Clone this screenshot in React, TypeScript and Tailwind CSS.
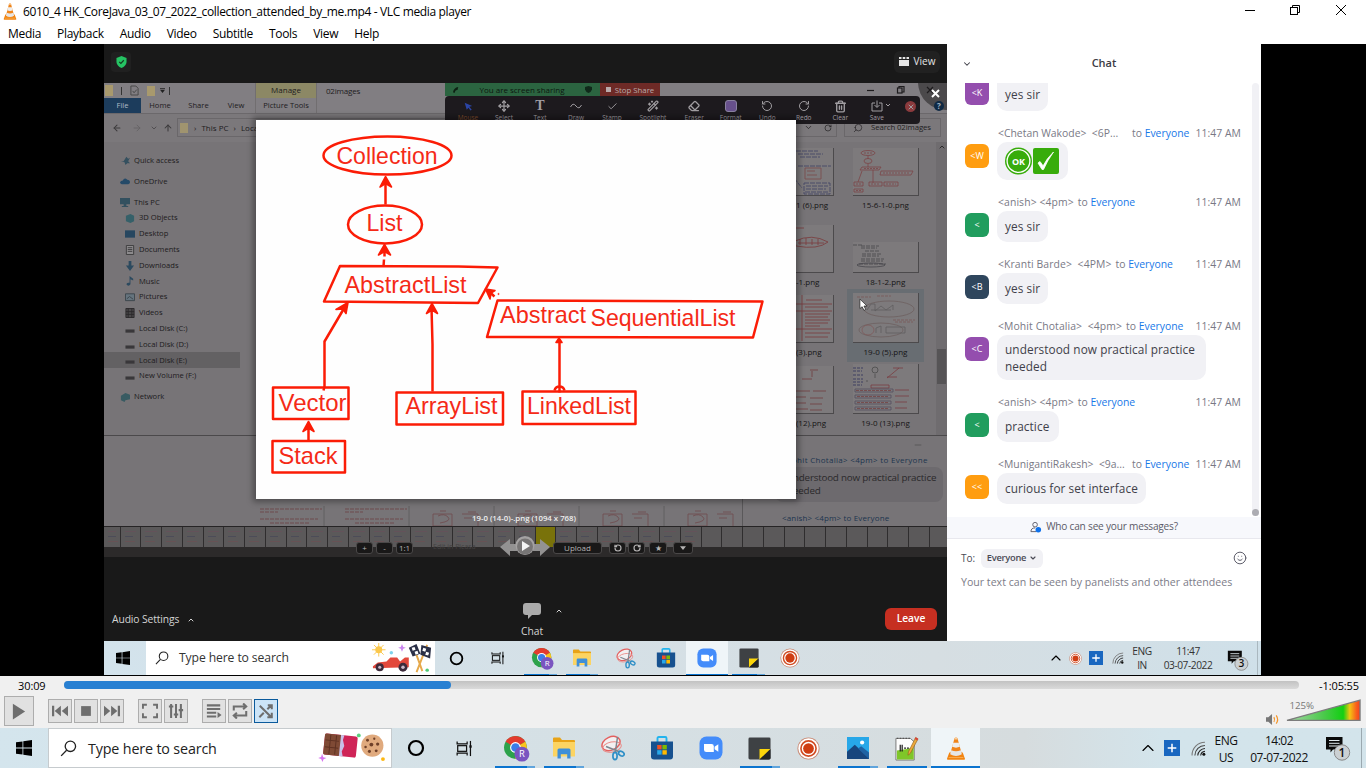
import React from "react";
import {
  ArrowLeft, ArrowRight, ArrowUp, Check, ChevronDown, ChevronUp, Eraser, Move,
  RotateCcw, RotateCw, Search, Trash2, Wand2, X, Smile, Minus,
} from "lucide-react";

type IconProps = { className?: string };

/* ---------- application icons ---------- */

const Cone = ({ className }: IconProps) => (
  <svg viewBox="0 0 24 28" className={className} preserveAspectRatio="none">
    <path d="M4 19 L1.2 26.5 Q1 27.6 2.3 27.6 H21.7 Q23 27.6 22.8 26.5 L20 19 Z" fill="#f28411" />
    <path d="M3.2 25 H20.8" stroke="#f9b45c" strokeWidth="1" />
    <path d="M10.2 1.5 Q12 -.3 13.8 1.5 L19 21 Q12 25 5 21 Z" fill="#f0841a" />
    <path d="M8.7 7 H15.3 L16.7 12 Q12 14 7.3 12 Z" fill="#eeeeee" />
    <path d="M6.3 16 Q12 18.4 17.7 16 L19 21 Q12 25 5 21 Z" fill="#e6e6e6" />
    <path d="M10.6 .9 Q12 -.1 13.4 .9 L14 3 H10 Z" fill="#f7cfa1" />
  </svg>
);

const WinLogo = ({ className }: IconProps) => (
  <svg viewBox="0 0 16 16" className={className}>
    <path d="M0 2.3 6.5 1.4V7.6H0ZM7.3 1.3 16 0V7.6H7.3ZM0 8.4H6.5V14.6L0 13.7ZM7.3 8.4H16V16L7.3 14.8Z" fill="#000" />
  </svg>
);

const Magnifier = ({ className }: IconProps) => (
  <svg viewBox="0 0 18 18" className={className} fill="none" stroke="#222" strokeWidth="1.4">
    <circle cx="11" cy="6.7" r="5.5" />
    <path d="M7 10.8 1.2 16.8" />
  </svg>
);

const Cortana = ({ className }: IconProps) => (
  <svg viewBox="0 0 18 18" className={className}>
    <circle cx="9" cy="9" r="7" fill="none" stroke="#000" strokeWidth="2.2" />
  </svg>
);

const TaskView = ({ className }: IconProps) => (
  <svg viewBox="0 0 18 18" className={className} fill="none" stroke="#111" strokeWidth="1.3">
    <path d="M1.2 1.5V4H11.8V1.5M1.2 16.5V14H11.8V16.5" />
    <rect x="1.8" y="6" width="9.4" height="6" />
    <path d="M15.3 1V17" />
    <rect x="14.2" y="5.6" width="2.4" height="2.6" fill="#111" stroke="none" />
  </svg>
);

const Chrome = ({ className }: IconProps) => (
  <svg viewBox="0 0 26 26" className={className}>
    <circle cx="12" cy="12" r="11" fill="#2da24b" />
    <path d="M12 12 L2.5 6.5 A11 11 0 0 1 21.5 6.5 Z" fill="#e33b2e" />
    <path d="M12 12 L21.5 6.5 A11 11 0 0 1 12 23 Z" fill="#fcc31e" />
    <circle cx="12" cy="12" r="5.2" fill="#fff" />
    <circle cx="12" cy="12" r="4.1" fill="#3b7de9" />
    <circle cx="18.2" cy="18.4" r="7.2" fill="#7a55c0" />
    <text x="18.2" y="21.6" fontSize="9" textAnchor="middle" fill="#fff" fontFamily="Open Sans, sans-serif">R</text>
  </svg>
);

const Folder = ({ className }: IconProps) => (
  <svg viewBox="0 0 24 22" className={className}>
    <path d="M1 1.5 Q1 .5 2 .5 H8 L10 3 H22 Q23 3 23 4 V19 H1 Z" fill="#e8a317" />
    <path d="M1 5 H23 V19.5 H1 Z" fill="#fcd462" />
    <path d="M5.5 21.5 V13 Q5.5 11.5 7 11.5 H17 Q18.5 11.5 18.5 13 V21.5 H15.2 V17.2 H8.8 V21.5 Z" fill="#3f8fd8" />
  </svg>
);

const Snip = ({ className }: IconProps) => (
  <svg viewBox="0 0 24 26" className={className} fill="none">
    <ellipse cx="10" cy="8.5" rx="9.5" ry="6.5" transform="rotate(-25 10 8.5)" stroke="#e4605f" strokeWidth="1.5" fill="#f3f0f1" />
    <ellipse cx="11" cy="12" rx="9.5" ry="5" transform="rotate(-12 11 12)" stroke="#e98a87" strokeWidth="1" />
    <path d="M16.5 2 L14.3 17.5 M5 11.5 L19 17" stroke="#7d8790" strokeWidth="1.5" />
    <ellipse cx="14" cy="21" rx="2.1" ry="3.6" stroke="#2e8fc7" strokeWidth="1.7" />
    <ellipse cx="20.3" cy="18.6" rx="3" ry="2.1" transform="rotate(30 20.3 18.6)" stroke="#2e8fc7" strokeWidth="1.7" />
  </svg>
);

const Store = ({ className }: IconProps) => (
  <svg viewBox="0 0 24 24" className={className}>
    <path d="M7.5 6 V2.2 Q7.5 1 8.7 1 H15.3 Q16.5 1 16.5 2.2 V6" fill="none" stroke="#23b4ee" strokeWidth="1.9" />
    <path d="M1 5.5 H23 V20.5 Q23 23.5 20 23.5 H4 Q1 23.5 1 20.5 Z" fill="#17518f" />
    <rect x="7.2" y="9" width="4.4" height="4.4" fill="#f25022" />
    <rect x="12.4" y="9" width="4.4" height="4.4" fill="#7fba00" />
    <rect x="7.2" y="14.2" width="4.4" height="4.4" fill="#28a8ea" />
    <rect x="12.4" y="14.2" width="4.4" height="4.4" fill="#ffb900" />
  </svg>
);

const ZoomApp = ({ className }: IconProps) => (
  <svg viewBox="0 0 24 24" className={className}>
    <rect x=".5" y=".5" width="23" height="23" rx="7" fill="#448cfa" />
    <path d="M5 8 H12.5 Q14.8 8 14.8 10.2 V16 H7.4 Q5 16 5 13.8 Z" fill="#fff" />
    <path d="M15.6 10.8 L19.3 8.3 V15.7 L15.6 13.3 Z" fill="#fff" />
  </svg>
);

const Sticky = ({ className }: IconProps) => (
  <svg viewBox="0 0 24 24" className={className}>
    <rect x=".5" y=".5" width="23" height="23" rx="1.5" fill="#3e4144" />
    <path d="M12 23.5 V12.5 H23.5 Z" fill="#fbd50b" />
    <path d="M12 23.5 L23.5 12.5 V22 Q23.5 23.5 22 23.5 Z" fill="#222426" />
  </svg>
);

const Recorder = ({ className }: IconProps) => (
  <svg viewBox="0 0 24 24" className={className}>
    <circle cx="12" cy="12" r="11.5" fill="#c98a74" />
    <circle cx="12" cy="12" r="10.6" fill="#fff" />
    <circle cx="12" cy="12" r="7.9" fill="#fff" stroke="#d14b22" strokeWidth="1.7" />
    <circle cx="12" cy="12" r="5.6" fill="#cf3d12" />
  </svg>
);

const Photos = ({ className }: IconProps) => (
  <svg viewBox="0 0 24 24" className={className}>
    <rect width="24" height="24" fill="#27a7e8" />
    <path d="M0 16 L8.5 8.5 L24 23 V24 H0 Z" fill="#17457d" />
    <path d="M12 12.5 L15.5 10 L24 17 V24 Z" fill="#1f62a3" />
    <circle cx="16.5" cy="6" r="2.3" fill="#fff" />
  </svg>
);

const Notepad = ({ className }: IconProps) => (
  <svg viewBox="0 0 26 26" className={className}>
    <path d="M2 2.5 H17 L21 6 V25 H2 Z" fill="#fdfdfd" stroke="#777" strokeWidth="1" />
    <path d="M3 15 Q12 14 20.5 12 V24.5 H3 Z" fill="#7fc629" />
    <path d="M3 2.5 H17" stroke="#555" strokeWidth="1.2" strokeDasharray="1.5 1.5" />
    <path d="M6.5 9 V16 M8.5 9 V16 M10.5 12.5 H12.5 M13.5 12.5 H15.5" stroke="#222" strokeWidth="1.3" />
    <path d="M22.5 1.5 L25 3 L17 18 L14.5 20 L15 16.5 Z" fill="#eba93c" stroke="#8c5a17" strokeWidth=".6" />
    <path d="M22.5 1.2 L25.2 2.8 L24.2 4.6 L21.5 3.1Z" fill="#d8433b" />
  </svg>
);

const Plus = ({ className }: IconProps) => (
  <svg viewBox="0 0 16 16" className={className}>
    <rect width="16" height="16" fill="#1967c0" />
    <path d="M8 3.7V12.3M3.7 8H12.3" stroke="#fff" strokeWidth="1.5" />
  </svg>
);

const Wifi = ({ className }: IconProps) => (
  <svg viewBox="0 0 14 14" className={className} fill="none" stroke="#777" strokeWidth="1">
    <path d="M1 13.5 A12 12 0 0 1 13 1.2" />
    <path d="M3.6 13.5 A9.5 9.5 0 0 1 13 4.2" stroke="#444" />
    <path d="M6.3 13.5 A7 7 0 0 1 13 7" stroke="#222" />
    <path d="M9 13.5 A4.5 4.5 0 0 1 13 9.7" stroke="#222" />
    <circle cx="12" cy="12.3" r="1.4" fill="#111" stroke="none" />
  </svg>
);

const Notice = ({ className, count }: IconProps & { count: string }) => (
  <svg viewBox="0 0 26 26" className={className}>
    <path d="M1 2 H17.5 V14.5 H8 L5.5 17.5 V14.5 H1 Z" fill="#0a0a0a" />
    <path d="M4 5.5 H14.5 M4 8.3 H14.5 M4 11 H14.5" stroke="#dfe8ec" strokeWidth="1" />
    <circle cx="17" cy="17.5" r="7.7" fill="#cbd0d3" stroke="#888" strokeWidth="1" />
    <text x="17" y="21.8" textAnchor="middle" fontSize="12" fontWeight="600" fill="#111" fontFamily="Open Sans, sans-serif">{count}</text>
  </svg>
);

const Treats = ({ className }: IconProps) => (
  <svg viewBox="0 0 70 30" className={className}>
    <g transform="rotate(6 22 14)">
      <rect x="5" y="3" width="34" height="22" rx="2" fill="#cf2457" />
      <rect x="5" y="3" width="18" height="22" rx="1.5" fill="#7f4a35" />
      <path d="M6 9.8H20 M6 17H20 M11 4V24 M17 4V24" stroke="#5f3223" strokeWidth="1" />
      <path d="M21.5 3 L25 3 L24 8 L26 14 L24 20 L25.5 25 H21.5 Z" fill="#c9bfe9" />
    </g>
    <circle cx="55" cy="14" r="11.500" fill="#e0aa7e" />
    <g fill="#6e4029">
      <circle cx="50" cy="8.5" r="1.5" /><circle cx="57" cy="7" r="1.2" /><circle cx="54" cy="13" r="2" />
      <circle cx="60.5" cy="12.5" r="1.7" /><circle cx="48" cy="15.5" r="1.3" /><circle cx="52" cy="20" r="1.6" />
      <circle cx="59" cy="19.5" r="1.5" />
    </g>
    <circle cx="41" cy="3.500" r="2" fill="#5bd07e" />
    <circle cx="66" cy="28" r="2" fill="#fdb813" />
    <path d="M3 22.5 L4.2 26 L7.5 27 L4.5 28.3 L3.5 31 L2 28 L-1 27 L2 25.8Z" fill="#d875f0" />
  </svg>
);

const RaceCar = ({ className }: IconProps) => (
  <svg viewBox="0 0 62 32" className={className}>
    <circle cx="7" cy="7" r="3.6" fill="#fbc84c" />
    <path d="M7 0V14M0 7H14M2 2L12 12M12 2L2 12" stroke="#fbc84c" strokeWidth="1" />
    <path d="M1 24 L6 20 L15 19 L19 15 L26 15 L29 19 L34 15 L38 15 L38 25 L1 26 Z" fill="#e2483b" />
    <circle cx="8" cy="25" r="4.2" fill="#3c2a3a" /><circle cx="8" cy="25" r="1.6" fill="#c8b9c8" />
    <circle cx="32" cy="25" r="4.6" fill="#3c2a3a" /><circle cx="32" cy="25" r="1.8" fill="#c8b9c8" />
    <path d="M31 1 L32.3 4 L35 5 L32.3 6 L31 9 L29.7 6 L27 5 L29.7 4Z" fill="#cb86ef" />
    <circle cx="20" cy="10" r="1.8" fill="#7fd3ec" />
    <path d="M43 4 L52 29 M57 2 L46 30" stroke="#e6a94b" strokeWidth="2" />
    <path d="M38 5 L46 1 L50 11 L42 14 Z M51 2 L61 5 L60 16 L50 12Z" fill="#2b3047" />
    <path d="M41 5l3-1 1 3-3 1zM44 9l3-1 1 3-3 1zM53 5l3 1-1 3-3-1zM56 9l3 1-1 3-3-1z" fill="#fff" />
    <circle cx="57" cy="28" r="1.8" fill="#4fca77" />
  </svg>
);

/* ---------- Windows taskbars ---------- */

type App = { Icon: React.FC<IconProps>; size: string; open?: boolean; stacked?: boolean; active?: boolean };

const baseApps: App[] = [
  { Icon: Chrome, size: "ml-1 size-[27px]", open: true, stacked: true },
  { Icon: Folder, size: "w-6 h-[22px]", open: true, stacked: true },
  { Icon: Snip, size: "w-6 h-[26px]" },
  { Icon: Store, size: "size-6" },
  { Icon: ZoomApp, size: "size-6" },
  { Icon: Sticky, size: "size-[23px]", open: true, stacked: true },
  { Icon: Recorder, size: "size-[23px]" },
];

const outerApps: App[] = [
  ...baseApps,
  { Icon: Photos, size: "size-[22px]", open: true, stacked: true },
  { Icon: Notepad, size: "size-[25px]", open: true },
  { Icon: Cone, size: "w-5 h-[23px]", open: true, active: true },
];

const innerSizes = ["ml-1 size-[23px]", "w-[20px] h-[18px]", "ml-1 w-5 h-[21px]", "ml-0.5 size-[20px]", "size-[20px]", "ml-0.5 size-[20px]", "size-[20px]"];
const innerApps: App[] = baseApps.map((a, i) => ({ ...a, size: innerSizes[i], active: i === 4, open: a.open || i === 4 }));

const AppButton = ({ app, cell, line }: { app: App; cell: string; line: string }) => (
  <div className={`${cell} relative flex h-full items-center justify-center ${app.active ? "bg-[#eff5f8]" : ""}`}>
    <app.Icon className={app.size} />
    {app.open && (
      <div className={`absolute bottom-0 flex ${app.active ? "inset-x-0" : "inset-x-[4.5px]"} ${line}`}>
        <div className="flex-1 bg-[#0b74cf]" />
        {app.stacked && <div className="w-2 bg-[#5fa4dc]" />}
      </div>
    )}
  </div>
);

const OuterTaskbar = () => (
  <div className="flex h-10 shrink-0 bg-linear-to-r from-[#d4e5ed] from-0% via-[#d6dcde] via-75% to-[#d3e4eb] to-85%">
    <div className="flex w-12 items-center justify-center"><WinLogo className="size-4" /></div>
    <div className="flex w-[344px] items-center border border-[#c6cbce] bg-white pl-[11px]">
      <Magnifier className="size-[17px]" />
      <span className="w-[242px] shrink-0 pl-[11px] pt-0.5 text-[14.3px] tracking-[-0.15px] text-[#222]">Type here to search</span>
      <Treats className="mb-1 h-[29px] w-[68px] shrink-0 overflow-visible" />
    </div>
    <div className="flex w-[47.5px] items-center justify-center"><Cortana className="size-[18px]" /></div>
    <div className="flex w-[49px] items-center justify-center"><TaskView className="size-[17px]" /></div>
    <div className="ml-[1.500px] flex">
      {outerApps.map((a, i) => <AppButton key={i} app={a} cell="w-[49px]" line="h-[2.5px]" />)}
    </div>
    <div className="ml-auto flex items-center">
      <ChevronUp className="size-5" strokeWidth={1.4} />
      <Plus className="ml-1.5 size-4" />
      <Wifi className="ml-[11px] size-[15px]" />
      <div className="w-10 pt-px text-center text-[12px] leading-[17px] tracking-[-0.5px] text-[#111]">ENG<br />US</div>
      <div className="w-[66px] pt-px text-center text-[12px] leading-[17px] tracking-[-0.5px] text-[#111]">14:02<br />07-07-2022</div>
      <Notice className="ml-[13px] size-[26px]" count="1" />
      <div className="ml-[10px] mr-1 h-10 w-px bg-[#9ba9b0]" />
    </div>
  </div>
);

const InnerTaskbar = () => (
  <div className="flex h-[34px] shrink-0 bg-linear-to-r from-[#d3e3ec] via-[#d6dee2] via-72% to-[#cfe0e9]">
    <div className="flex w-[42px] items-center justify-center"><WinLogo className="mr-1 size-[14px]" /></div>
    <div className="flex w-[289px] items-center bg-white pl-[9px]">
      <Magnifier className="size-[14px]" />
      <span className="w-[202px] shrink-0 pl-[10px] pt-px text-[12.2px] tracking-[-0.12px] text-[#333]">Type here to search</span>
      <RaceCar className="h-[31px] w-[62px] shrink-0" />
    </div>
    <div className="flex w-[42.600px] items-center justify-center"><Cortana className="size-[15px]" /></div>
    <div className="flex w-[40.600px] items-center justify-center"><TaskView className="size-[14px]" /></div>
    <div className="ml-[1.500px] flex">
      {innerApps.map((a, i) => <AppButton key={i} app={a} cell="w-[41.6px]" line="h-[1.5px]" />)}
    </div>
    <div className="ml-auto flex items-center">
      <ChevronUp className="size-4" strokeWidth={1.7} />
      <Recorder className="ml-[5px] size-[13px]" />
      <Plus className="ml-[7px] size-[14px]" />
      <Wifi className="ml-[9px] size-3" />
      <div className="w-9 text-center text-[10.2px] leading-[14.5px] tracking-[-0.4px] text-[#333]">ENG<br />IN</div>
      <div className="w-[56px] text-center text-[10.2px] leading-[14.5px] tracking-[-0.45px] text-[#333]">11:47<br />03-07-2022</div>
      <Notice className="ml-[11px] mt-1 size-[22px]" count="3" />
      <div className="ml-2 mr-[3px] h-[34px] w-px bg-[#aab8bf]" />
    </div>
  </div>
);

/* ---------- player window ---------- */

const TitleBar = () => (
  <div className="flex h-6 shrink-0 items-center bg-white pl-[3px]">
    <Cone className="mb-px h-[17px] w-3.5" />
    <span className="ml-1.5 whitespace-nowrap text-[12px] tracking-[-0.35px] text-black">
      6010_4 HK_CoreJava_03_07_2022_collection_attended_by_me.mp4 - VLC media player
    </span>
    <svg viewBox="0 0 140 20" className="ml-auto h-5 w-[140px]" fill="none" stroke="#000" strokeWidth="1">
      <path d="M19 8.500H29" />
      <rect x="64.500" y="5.500" width="7" height="7" /><path d="M66.500 5.500V3.500H73.500V10.500H71.500" />
      <path d="M110 3L120 13M120 3L110 13" />
    </svg>
  </div>
);

const MenuBar = () => (
  <div className="flex h-5 shrink-0 items-center gap-4 bg-white pl-2 text-[12px] tracking-[-0.3px] text-black">
    {["Media", "Playback", "Audio", "Video", "Subtitle", "Tools", "View", "Help"].map((m) => <span key={m}>{m}</span>)}
  </div>
);

const btn = "flex items-center justify-center border border-[#adadad] bg-[#e1e1e1]";

const ControlButton = ({ d, on, stroke }: { d: string; on?: boolean; stroke?: boolean }) => (
  <div className={`size-6 ${on ? "flex items-center justify-center border border-[#0a5a9c] bg-[#cce4f7]" : btn}`}>
    <svg viewBox="0 0 18 18" className="size-4" fill={stroke ? "none" : "#6e6e6e"} stroke={stroke ? "#6e6e6e" : "none"} strokeWidth="2.300">
      <path d={d} />
    </svg>
  </div>
);

const PlayerControls = () => (
  <div className="flex h-[52px] shrink-0 flex-col bg-[#f0f0f0] text-black">
    <div className="flex h-[20px] items-center text-[11px] tracking-[-0.1px]">
      <span className="w-[64px] pl-[18px] pt-px">30:09</span>
      <div className="mb-[3px] h-2 w-[1235px] rounded-sm bg-linear-to-b from-[#c2c2c2] to-[#dadada]">
        <div className="h-full w-[387px] rounded-sm bg-[#2880d2]" />
      </div>
      <span className="ml-auto whitespace-nowrap pr-[7px] pt-px">-1:05:55</span>
    </div>
    <div className="flex items-center pl-1">
      <div className={`size-[30px] ${btn}`}>
        <svg viewBox="0 0 16 18" className="h-[17px] w-[14px]"><path d="M1 0L15 9L1 18Z" fill="#6e6e6e" /></svg>
      </div>
      <div className="ml-3.5 flex gap-0.5">
        <ControlButton d="M0 3H2.500V15H0ZM10 3V15L3 9ZM18 3V15L11 9Z" />
        <ControlButton d="M3.500 3.500H14.500V14.500H3.500Z" />
        <ControlButton d="M18 3H15.500V15H18ZM8 3V15L15 9ZM0 3V15L7 9Z" />
      </div>
      <div className="ml-3.5 flex gap-0.5">
        <ControlButton stroke d="M1 6.500V2H5.500M12.500 2H17V6.500M17 11.500V16H12.500M5.500 16H1V11.500" />
        <ControlButton stroke d="M3.500 1V17M9 1V17M14.500 1V17M1 4H6M6.500 13H11.500M12 8H17" />
      </div>
      <div className="ml-3.5 flex gap-0.5">
        <ControlButton d="M1 1.500H16V3.900H1ZM1 5.500H16V7.900H1ZM1 9.800H11.500V12.200H1ZM1 14H11.500V16.400H1ZM13 10L17.500 13.500L13 17Z" />
        <ControlButton stroke d="M2 8.500V4H15M12.500 .5L16 4L12.500 7M16 9V14H3M5.500 11L2 14L5.500 17.500" />
        <ControlButton on stroke d="M2 3L14.500 15.500M1.500 16L6.500 11M10.500 7L15 2.500M11 2.500H15.500V7M15.500 11V16H10.500" />
      </div>
      <div className="ml-auto mr-[5px] flex">
        <svg viewBox="0 0 16 14" className="mt-4 h-[13px] w-[15px]">
          <path d="M1 4.500H3.500L7.500 1V13L3.500 9.500H1Z" fill="#777" />
          <path d="M9.500 4.500Q11 7 9.500 9.500M12 2.500Q15 7 12 11.500" fill="none" stroke="#f3962b" strokeWidth="1.300" />
        </svg>
        <svg viewBox="0 0 76 26" className="ml-1.5 h-[26px] w-[75px] overflow-visible">
          <defs>
            <linearGradient id="vol">
              <stop offset="0" stopColor="#a8d8a8" /><stop offset=".5" stopColor="#4cc94c" /><stop offset=".77" stopColor="#12d012" />
              <stop offset=".86" stopColor="#f3c412" /><stop offset=".95" stopColor="#f9601c" /><stop offset="1" stopColor="#f53f1c" />
            </linearGradient>
          </defs>
          <path d="M1 23.500L75 3V23.500Z" fill="url(#vol)" stroke="#7c7c7c" strokeWidth="1.400" />
          <text x="3.500" y="11.500" fontSize="9.500" fill="#777" fontFamily="Open Sans, sans-serif" textLength="25" lengthAdjust="spacingAndGlyphs" letterSpacing="0">125%</text>
        </svg>
      </div>
    </div>
  </div>
);

/* ---------- shared screen ---------- */

const sideIcons: Record<string, React.ReactNode> = {
  pin: <path d="M1 7H4L7 2L9 4L11 3L9 7L11 9L8 9L6 11L5 8Z" fill="#35505f" />,
  cloud: <path d="M2 9Q0 9 0 7Q1 5 3 5Q5 1 8 4Q11 4 11 7Q11 9 9 9Z" fill="#254a68" />,
  pc: <path d="M0 1H11V8H7V10H9V11H2V10H4V8H0Z" fill="#33505f" />,
  cube: <path d="M1 3L6 1L10 3V9L6 11L1 9Z" fill="#356069" />,
  screen: <path d="M0 1.500H11V9.500H0Z" fill="#274760" />,
  doc: <path d="M1.500 .5H9.500V10.500H1.500ZM3 3H8M3 5H8M3 7H8" fill="#8c8a8c" stroke="#3a3a3c" />,
  down: <path d="M4 0H7V5H10L5.500 11L1 5H4Z" fill="#2c4a5f" />,
  note: <path d="M5 0L9 3V5L6 3.500V9Q5 11 3 10.500Q1 10 2 8Q3 7 5 7.500Z" fill="#2c4a5f" />,
  pic: <path d="M.5 2H10.500V9.500H.5ZM2 7.500L5 5L9 8" fill="#65747e" stroke="#3b434a" />,
  film: <path d="M1 .5H10V10.500H1ZM3.500 .5V10.500M7.500 .5V10.500M1 4H10M1 7H10" fill="#4a484a" stroke="#2a282a" />,
  disk: <path d="M.5 6H10.500V9.500H.5Z" fill="#39373a" />,
  net: <path d="M1 4L6 1L11 3V8L6 9L5 11L1 9Z" fill="#385b62" />,
};

const places: { label: string; icon: string; root?: boolean; gap?: boolean; sel?: boolean }[] = [
  { label: "Quick access", icon: "pin", root: true },
  { label: "OneDrive", icon: "cloud", root: true, gap: true },
  { label: "This PC", icon: "pc", root: true, gap: true },
  { label: "3D Objects", icon: "cube" },
  { label: "Desktop", icon: "screen" },
  { label: "Documents", icon: "doc" },
  { label: "Downloads", icon: "down" },
  { label: "Music", icon: "note" },
  { label: "Pictures", icon: "pic" },
  { label: "Videos", icon: "film" },
  { label: "Local Disk (C:)", icon: "disk" },
  { label: "Local Disk (D:)", icon: "disk" },
  { label: "Local Disk (E:)", icon: "disk", sel: true },
  { label: "New Volume (F:)", icon: "disk" },
  { label: "Network", icon: "net", root: true, gap: true },
];

const Sidebar = () => (
  <div className="flex w-[136px] flex-col pt-[10.500px]">
    {places.map((p) => (
      <div
        key={p.label}
        className={`flex h-[15.8px] items-center gap-1 text-[7.6px] text-[#1d1b1d] ${p.gap ? "mt-[5.2px]" : ""} ${p.root ? "pl-4" : "pl-[21px]"} ${p.sel ? "bg-[#636163]" : ""}`}
      >
        <svg viewBox="0 0 11 11" className="size-2.5">{sideIcons[p.icon]}</svg>
        <span className="whitespace-nowrap">{p.label}</span>
      </div>
    ))}
  </div>
);

const DiagramThumb = () => (
  <svg viewBox="0 0 65 47" className="h-[47px] w-[65px] opacity-75" fill="none" stroke="#7b3436" strokeWidth=".8">
    <ellipse cx="15" cy="5" rx="7" ry="2.500" /><ellipse cx="15" cy="13" rx="4" ry="2.500" />
    <path d="M15 8V11M15 16V19M9 19H28L26 22H7ZM28 23H60L58 27H27ZM9 23L5 34M20 22V35M1 34H10V38H1ZM1 41H10V44H1ZM16 34H29V38H16ZM31 34H45V38H31Z" />
    <path d="M11 5H19M11 20.500H25M30 25H56M3 36H8M3 42.500H8M18 36H27M33 36H43" strokeDasharray="2 1" />
  </svg>
);

const NotesThumb = () => (
  <svg viewBox="0 0 65 30" className="h-[30px] w-[65px] opacity-80" fill="none" stroke="#3a3a40" strokeWidth=".8">
    <path d="M0 3H10M8 4H26M8 6H24M12 9H27M9 12H28M9 14H26M8 17H31M8 19H30M6 22H33" strokeDasharray="4 1" />
    <ellipse cx="18" cy="23" rx="14" ry="2" />
  </svg>
);

const EllipseThumb = () => (
  <svg viewBox="0 0 65 49" className="h-[49px] w-[65px] opacity-55" fill="none" stroke="#5d4542" strokeWidth=".7">
    <path d="M4 4H18M24 3H38M42 29H60M40 27H62" strokeDasharray="3 1" stroke="#733" />
    <ellipse cx="36" cy="16" rx="25" ry="8" /><ellipse cx="28" cy="37" rx="22" ry="7" />
    <path d="M14 17L18 11H22V18L28 13L33 17L40 12V17M18 17H38M23 40V35L28 33V40M33 40V34H52V40Z" stroke="#444" />
    <ellipse cx="15" cy="37" rx="6" ry="5" stroke="#823a3a" />
  </svg>
);

const TableThumb = () => (
  <svg viewBox="0 0 65 49" className="h-[49px] w-[65px] opacity-85" fill="none" strokeWidth=".8">
    <path d="M0 4H10M0 7H9M0 11H10M0 15H10M0 18H10M0 21H9" stroke="#34345c" strokeDasharray="3 1" strokeWidth="1.200" />
    <ellipse cx="22" cy="6" rx="3" ry="3" stroke="#444" /><path d="M22 10V14M13 17H15" stroke="#444" />
    <path d="M40 4H50M34 13H44M34 14L46 4M18 21H36V24H18ZM42 26H56M42 32H56M42 38H54M42 44H54" stroke="#7a3437" />
    <path d="M2 25H40V28H2ZM2 31H38V34H2ZM2 37H38V40H2ZM2 43H38V46H2Z" stroke="#4e4a5c" />
    <path d="M3 26.500H39M4 32.500H36M4 38.500H36M4 44.500H36" stroke="#743838" strokeDasharray="3 1" />
  </svg>
);

const LeftThumb = ({ kind }: { kind: number }) => (
  <svg viewBox="0 0 65 47" className="h-[47px] w-[65px] opacity-80" fill="none" strokeWidth=".9">
    {kind === 0 && <path d="M28 3H50M30 6H55M32 9H52M26 30L34 40M38 38H60M38 41H58M37 44H60M36 35H62V46H36ZM30 18H63" stroke="#383c62" strokeDasharray="5 1" />}
    {kind === 0 && <path d="M37 20H53V31H37ZM39 23H47M39 27H49" stroke="#7a4546" />}
    {kind === 1 && <path d="M27 16Q44 8 60 17Q50 25 28 21ZM32 14V20M38 13V20M44 14V20M50 14V20M30 18H56M28 3H36" stroke="#7a3436" />}
    {kind === 2 && <path d="M34 0V46M28 9H64M28 16H64M28 34H64M38 5H54M37 12H60M37 19H62M37 22H60M37 25H62M37 28H60M37 31H52M37 38H62M37 42H60" stroke="#7a3436" />}
    {kind === 3 && <path d="M42 4H50M34 13H44M44 5V11M28 25H42M45 25H58M28 31H38M42 32H55M28 37H38M42 38H54M28 43H40M42 44H54" stroke="#703638" />}
  </svg>
);

const FileCell = ({ thumb, label, h, left, sel }: { thumb: React.ReactNode; label: string; h: string; left?: boolean; sel?: boolean }) => (
  <div className={`${h} flex w-[85px] flex-col justify-end`}>
    <div className={`flex flex-col ${left ? "items-start pl-2.5" : "mx-1 items-center pt-1"} ${sel ? "bg-[#686d72]" : ""}`}>
      <div className="border-b border-r border-[#4c4a4c] bg-[#7d7a7c]">{thumb}</div>
      <div className={`h-[19px] whitespace-nowrap pt-[3px] text-[8px] leading-[12px] text-[#161416] ${left ? "pl-7" : ""}`}>{label}</div>
    </div>
  </div>
);

const FilePane = () => (
  <div className="ml-auto flex w-[189px]">
    <div className="flex flex-col">
      <FileCell h="h-[73px]" left thumb={<LeftThumb kind={0} />} label="1 (6).png" />
      <FileCell h="h-[77px]" left thumb={<LeftThumb kind={1} />} label="-1.png" />
      <FileCell h="h-[70px]" left thumb={<LeftThumb kind={2} />} label="(3).png" />
      <FileCell h="h-[71px]" left thumb={<LeftThumb kind={3} />} label="(12).png" />
    </div>
    <div className="flex flex-col">
      <FileCell h="h-[73px]" thumb={<DiagramThumb />} label="15-6-1-0.png" />
      <FileCell h="h-[77px]" thumb={<NotesThumb />} label="18-1-2.png" />
      <FileCell h="h-[70px]" sel thumb={<EllipseThumb />} label="19-0 (5).png" />
      <FileCell h="h-[71px]" thumb={<TableThumb />} label="19-0 (13).png" />
    </div>
    <div className="ml-auto flex w-[11px] flex-col items-center bg-[#6f6c6f]">
      <ChevronUp className="mt-px size-2 text-[#2a282a]" strokeWidth={3} />
      <div className="mt-[198px] h-[35px] w-[9px] bg-[#565456]" />
    </div>
  </div>
);

const ExplorerChrome = () => (
  <div className="flex flex-col text-[7.6px] text-[#1e1c1e]">
    <div className="flex h-[30px] bg-[#817e82]">
      <div className="flex w-[151px] flex-col">
        <div className="flex h-[15px] items-center gap-1 pl-px">
          <span className="h-[11px] w-2 bg-[#a8996d]" />
          <span className="ml-1 h-2 w-px bg-[#333]" />
          <svg viewBox="0 0 10 12" className="ml-1 h-[11px] w-[9px]" fill="none" stroke="#444"><path d="M1 1H6.500L9 3.500V11H1ZM3 6.500L4.500 8.500L7.500 5" /></svg>
          <span className="ml-1 h-[10px] w-2 bg-[#a8996d]" />
          <svg viewBox="0 0 6 6" className="ml-px size-[5px]"><path d="M0 0H6V1H0ZM0 2H6L3 6Z" fill="#222" /></svg>
          <span className="h-2 w-px bg-[#333]" />
        </div>
        <div className="flex h-[15px] items-center">
          <span className="flex h-full w-[37px] items-center justify-center bg-[#1c3c5c] text-[#aebac6]">File</span>
          <span className="w-[38px] text-center">Home</span>
          <span className="w-[39px] text-center">Share</span>
          <span className="w-9 text-center">View</span>
        </div>
      </div>
      <div className="flex w-[62px] flex-col border-x border-[#716e70]">
        <span className="flex h-[15px] items-center justify-center bg-[#8c8865] pb-0.5 text-[8px]">Manage</span>
        <span className="flex h-[15px] items-center justify-center">Picture Tools</span>
      </div>
      <span className="pl-[9px] pt-[2px] text-[8px] tracking-[-0.2px]">02images</span>
    </div>
    <div className="flex h-[29px] items-center border-t border-[#6b686b] bg-[#7b787b] pb-px pl-2">
      <ArrowLeft className="size-2.5 text-[#3c3a3c]" strokeWidth={2.500} />
      <ArrowRight className="ml-2.5 size-2.5 text-[#636063]" />
      <ChevronDown className="ml-2 size-2 text-[#3c3a3c]" />
      <ArrowUp className="ml-[5px] size-2.5 text-[#3c3a3c]" strokeWidth={2.500} />
      <div className="ml-1 flex h-[19px] w-[660px] items-center border border-[#6a676a] pl-0.5 text-[8px]">
        <span className="h-2.5 w-2 bg-[#a0946f]" />
        <span className="ml-1.5">›</span>
        <span className="ml-[5px]">This PC</span>
        <span className="ml-[5px]">›</span>
        <span className="ml-[5px]">Local Disk (E:)</span>
        <ChevronDown className="ml-auto mr-[11px] size-[9px]" />
        <RotateCw className="mr-1 size-2" />
      </div>
      <div className="ml-[7px] flex h-[19px] w-[97px] items-center gap-[8px] border border-[#6a676a] pl-2 text-[7.800px] tracking-[-0.1px]">
        <Search className="size-2.5 -scale-x-100" strokeWidth={1.5} />Search 02images
      </div>
    </div>
  </div>
);

const tools: { label: string; icon: React.ReactNode; w: string }[] = [
  { label: "Mouse", w: "w-9", icon: <svg viewBox="0 0 12 12" className="size-2.5"><path d="M2 2L11 6L7.500 7L10.500 10.500L9 11.500L6.500 8L4.500 10.500Z" fill="#2b45a6" /></svg> },
  { label: "Select", w: "w-9", icon: <Move className="size-3" strokeWidth={2.500} /> },
  { label: "Text", w: "w-9", icon: <span className="font-['Liberation_Serif',serif] text-[14px] font-bold leading-3">T</span> },
  { label: "Draw", w: "w-9", icon: <svg viewBox="0 0 12 8" className="h-2 w-3" fill="none" stroke="currentColor"><path d="M.5 5Q3 0 6 4T11.500 3" /></svg> },
  { label: "Stamp", w: "w-9", icon: <Check className="size-[11px]" /> },
  { label: "Spotlight", w: "w-[46px]", icon: <Wand2 className="size-3" strokeWidth={2.500} /> },
  { label: "Eraser", w: "w-[36.5px]", icon: <Eraser className="size-3" strokeWidth={2.500} /> },
  { label: "Format", w: "w-[36.5px]", icon: <span className="size-3 rounded-[3px] border border-[#8a82a0] bg-[#67508c]" /> },
  { label: "Undo", w: "w-[36.5px]", icon: <RotateCcw className="size-3" /> },
  { label: "Redo", w: "w-[36.5px]", icon: <RotateCw className="size-3" /> },
  { label: "Clear", w: "w-[36.5px]", icon: <Trash2 className="size-[13px]" strokeWidth={2.500} /> },
  { label: "Save", w: "w-[36.5px]", icon: <svg viewBox="0 0 20 12" className="ml-2 h-3 w-5" fill="none" stroke="currentColor"><path d="M4 3H1V11H11V3H8M6 .5V7M3.500 5L6 7.500L8.500 5M15 4L17 6L19 4" /></svg> },
];

const AnnotationBar = () => (
  <div className="absolute left-[341px] top-0">
    <div className="flex h-[13px] text-[8px] leading-3">
      <div className="flex w-[155px] items-center justify-between bg-[#2b6440] px-2 text-[#0b160f]">
        <svg viewBox="0 0 8 8" className="size-1.5"><path d="M0 7Q1 1 7 0L6 4Q3 3 2 8Z" fill="#0d2013" /></svg>
        <span className="whitespace-nowrap pt-px">You are screen sharing</span>
        <svg viewBox="0 0 8 8" className="size-[7px]"><path d="M4 0L8 1V4Q7 7 4 8Q1 7 0 4V1Z" fill="#10291a" /></svg>
      </div>
      <div className="flex w-[60px] items-center justify-center gap-1 bg-[#6e2a26] text-[7.800px] text-[#b9abab]">
        <span className="size-[5px] bg-[#b9abab]" />Stop Share
      </div>
    </div>
    <div className="flex h-[28px] w-[475px] items-start rounded-sm bg-[#1d1a1e] pl-[5px] pt-[3px] text-[#a09da1]">
      {tools.map((t, i) => (
        <div key={t.label} className={`${t.w} flex flex-col items-center`}>
          <div className="flex h-3.5 items-center">{t.icon}</div>
          <span className={`text-[6.500px] leading-[9px] ${i === 0 ? "text-[#7d4a2c]" : ""}`}>{t.label}</span>
        </div>
      ))}
      <span className="ml-2.5 mt-0.5 flex size-[11px] items-center justify-center rounded-full bg-[#8b3a3d]"><X className="size-2" strokeWidth={3} /></span>
    </div>
  </div>
);

const Label = ({ x, y, w, children }: { x: number; y: number; w: number; children: string }) => (
  <text x={x} y={y} textLength={w} lengthAdjust="spacingAndGlyphs" fontSize="24" fill="#f52a17" stroke="none">{children}</text>
);

const ClassDiagram = () => (
  <svg
    viewBox="255.500 120.500 540 379"
    className="absolute left-[151.500px] top-[37px] h-[379px] w-[540px] bg-[#fefefe] font-['Liberation_Sans',sans-serif] shadow-[0_0_6px_3px_rgba(0,0,0,0.35)]"
    fill="none" stroke="#fb1c06" strokeWidth="2.500" strokeLinejoin="round"
  >
    <ellipse cx="387" cy="156" rx="64" ry="19" />
    <ellipse cx="384.500" cy="225" rx="37" ry="19" />
    <path d="M385 205V180" />
    <path d="M383 267L383.500 260M384 257V250" />
    <path d="M339.500 266.500L458 267L497 268L477.500 303.500L323.500 302Z" />
    <path d="M323 391L324 387V342L344 308" />
    <path d="M432 392V345L431 308" />
    <path d="M497 301L762 302L752.500 338L486.500 337.500Z" />
    <path d="M494 297L489 292.500" />
    <g fill="#fb1c06" strokeWidth="1.600">
      <path d="M385 177L391 187.500L385 184L379.500 187.500Z" />
      <path d="M384 245L390 255.500L384 252L378 255.500Z" />
      <path d="M347.500 303L345.500 314L342.500 309.500L335.500 310Z" />
      <path d="M431.500 304L437 314L431.500 310.500L426 314Z" />
      <path d="M485 289.500L494.500 291L490.500 293.500L489.500 299.500Z" />
      <path d="M308 422L313.500 432L308 428.500L302.500 432Z" />
      <path d="M558.500 338.500L561.500 343H555.500Z" />
    </g>
    <circle cx="498" cy="294.500" r=".6" strokeWidth="1" />
    <path d="M559 393V340M554 391Q555 387 559 387Q563 387 564 391" />
    <rect x="272.500" y="388" width="75.500" height="31.500" />
    <path d="M308 441V427" />
    <rect x="272" y="441.500" width="72.500" height="31.500" />
    <rect x="396" y="393" width="106.500" height="32" />
    <rect x="522" y="392" width="113" height="32.500" />
    <Label x={336} y={164} w={101}>Collection</Label>
    <Label x={366} y={231.500} w={36}>List</Label>
    <Label x={344} y={293} w={122}>AbstractList</Label>
    <Label x={499.500} y={323.500} w={86}>Abstract</Label>
    <Label x={590} y={326.500} w={145}>SequentialList</Label>
    <Label x={278} y={411.500} w={68}>Vector</Label>
    <Label x={278} y={464.500} w={59}>Stack</Label>
    <Label x={405} y={414.500} w={92}>ArrayList</Label>
    <Label x={526.500} y={414.500} w={104}>LinkedList</Label>
  </svg>
);

const LowerThumbs = () => (
  <div className="flex h-full w-[638px] items-end overflow-hidden pl-[154px]">
    {[0, 1, 2, 3, 4, 5].map((i) => (
      <svg key={i} viewBox="0 0 85 20" className="h-5 w-[85px] shrink-0 opacity-80" fill="none" stroke="#6f4144" strokeWidth=".8">
        <path d="M66 0V20" stroke="#555" />
        {i < 2
          ? <path d="M2 3H64M2 6H20M2 13H60M12 17H52" strokeDasharray="4 1" strokeWidth="1.200" />
          : <path d="M5 8H24V20H5ZM34 8H50V20M10 10Q16 7 20 11T12 17M36 12H44M12 5H18M40 6H48" />}
      </svg>
    ))}
  </div>
);

const pill = "flex h-[12px] items-center justify-center rounded-[3px] border border-[#4a4848] bg-[#191818] text-[8px] leading-none text-[#b5b3b3]";

const ViewerControls = () => (
  <div className="absolute inset-x-0 bottom-0 flex h-[23px] items-center pl-[252px] pt-[4px]">
    <div className="flex gap-[3px]">
      <span className={`${pill} w-[17px]`}>+</span>
      <span className={`${pill} w-[17px]`}>-</span>
      <span className={`${pill} w-[17px]`}>1:1</span>
    </div>
    <span className="ml-[20px] w-[50px] whitespace-nowrap text-[7px] text-[#444242]">Edit in Picasa</span>
    <svg viewBox="0 0 52 22" className="-mt-1 ml-[16px] h-[22px] w-[52px]">
      <path d="M1 12L11 4V9H18V16H11V21ZM51 12L41 4V9H34V16H41V21Z" fill="#939292" />
      <circle cx="26" cy="10.500" r="9.500" fill="#a4a2a2" /><circle cx="26" cy="11.500" r="8" fill="#777575" />
      <path d="M23 6L31 11L23 16Z" fill="#f4f4f4" />
    </svg>
    <span className={`${pill} ml-0.5 w-[49px]`}>Upload</span>
    <span className={`${pill} ml-[7px] w-[17px]`}><RotateCcw className="size-2" strokeWidth={3.500} /></span>
    <span className={`${pill} ml-0.5 w-[17px]`}><RotateCw className="size-2" strokeWidth={3.500} /></span>
    <span className={`${pill} ml-1 w-[18px]`}>★</span>
    <span className={`${pill} ml-1.5 w-[20px]`}><svg viewBox="0 0 8 5" className="h-1 w-1.5"><path d="M0 0H8L4 5Z" fill="#b5b3b3" /></svg></span>
  </div>
);

const SharedScreen = () => (
  <div className="relative flex h-[474px] flex-col overflow-hidden bg-[#777477]">
    <ExplorerChrome />
    <div className="flex h-[294px] shrink-0 border-b border-[#4b494b]">
      <Sidebar />
      <FilePane />
    </div>
    <div className="flex h-[90px] shrink-0">
      <LowerThumbs />
      <div className="flex flex-1 flex-col border-l border-[#5a585a] text-[8px] text-[#20354f]">
        <div className="flex h-[18px] items-center pl-[170px] text-[#555]"><Minus className="size-2.5" /></div>
        <div className="h-[13px] whitespace-nowrap pl-[49px] leading-[11px] tracking-[0.3px]">ohit Chotalia&gt; &lt;4pm&gt; to Everyone</div>
        <div className="ml-8 mr-1 h-[35px] whitespace-nowrap rounded-lg bg-[#6d6a6e] pl-[18px] pt-[4px] text-[9.800px] leading-[13px] tracking-[-0.2px] text-[#2b292b]">nderstood now practical practice<br />eeded</div>
        <div className="pl-[39px] pt-[9px] leading-[14px] tracking-[0.15px]">&lt;anish&gt; &lt;4pm&gt; to Everyone</div>
      </div>
    </div>
    <div className="flex h-[21px] shrink-0 overflow-hidden border-t border-[#262425] bg-[#5b595a]">
      {Array.from({ length: 42 }, (_, i) => (
        <div key={i} className={`flex shrink-0 flex-col gap-1 overflow-hidden border-r border-[#2f2d2e] px-1 pt-1 ${i === 0 ? "w-[16.700px]" : "w-[20.750px]"} ${i === 21 ? "bg-[#79720a]" : ""}`}>
          {i < 29 && i !== 21 && <><span className="h-px bg-[#64525a]" /><span className="h-px w-2 bg-[#4c4c58]" /><span className="h-px w-2.5 bg-[#675255]" /></>}
        </div>
      ))}
    </div>
    <div className="h-2.5 shrink-0 bg-[#2c2a2a]" />
    <AnnotationBar />
    <svg viewBox="0 0 90 30" className="absolute right-0 top-0 h-[30px] w-[90px]" fill="none" stroke="#1d1b1d" strokeWidth="1.200">
      <path d="M61 0A28 28 0 0 0 90 27V0Z" fill="#4b494b" stroke="none" />
      <path d="M10 7.500H17" />
      <rect x="40.500" y="5" width="4.500" height="5" /><path d="M42 5V3.500H47V9H45" />
      <path d="M70 4L76 10M76 4L70 10" />
      <path d="M75 7L82 14M82 7L75 14" stroke="#fff" strokeWidth="2" />
      <circle cx="82" cy="23" r="5" fill="#102a44" stroke="none" />
      <text x="82" y="26" fontSize="8" fontWeight="bold" textAnchor="middle" stroke="none" fill="#a4b4c4">?</text>
    </svg>
    <ClassDiagram />
    <div className="absolute left-[340px] top-[429px] w-40 text-center text-[7.800px] font-semibold leading-3 text-[#efefef]">19-0 (14-0)-.png (1094 x 768)</div>
    <ViewerControls />
    <svg viewBox="0 0 10 14" className="absolute left-[755px] top-[215px] h-[13px] w-[9px]"><path d="M1 1V11.500L3.500 9.500L5.500 13.500L7.500 12.500L5.500 8.700H9Z" fill="#fff" stroke="#222" strokeWidth=".8" /></svg>
  </div>
);

const Meeting = () => (
  <div className="flex w-[843px] flex-col bg-[#191919] text-[#d4d4d4]">
    <div className="flex h-[39px] shrink-0 items-center pb-1">
      <div className="ml-[7px] flex size-5 items-center justify-center rounded bg-[#202020]">
        <svg viewBox="0 0 12 13" className="h-3 w-[11px]"><path d="M6 0L11.500 2V6.500Q11 11 6 13Q1 11 .5 6.500V2Z" fill="#25c363" /><path d="M3.500 6.300L5.300 8L8.500 4.600" fill="none" stroke="#143d22" strokeWidth="1.300" /></svg>
      </div>
      <div className="ml-auto mr-[7px] flex h-[22px] w-[46px] items-center justify-center gap-[5px] rounded-md bg-[#212121] text-[10px] text-[#e5e5e5]">
        <svg viewBox="0 0 10 9" className="h-[9px] w-2.5"><path d="M0 0H2.500V2H0ZM3.700 0H6.300V2H3.700ZM7.500 0H10V2H7.500ZM0 3H10V9H0Z" fill="#e5e5e5" /></svg>View
      </div>
    </div>
    <SharedScreen />
    <div className="flex flex-1 text-[10.300px]">
      <div className="flex w-[400px] items-center gap-2 pl-2 pt-[41px] tracking-[-0.1px]">Audio Settings <ChevronUp className="size-2" strokeWidth={3} /></div>
      <div className="flex flex-1 gap-3 pl-[17px]">
        <div className="flex flex-col items-center pt-[46px] leading-[14px]">
          <svg viewBox="0 0 18 16" className="h-4 w-[18px]"><path d="M3 0H15Q18 0 18 3V9Q18 12 15 12H9L5 16V12H3Q0 12 0 9V3Q0 0 3 0Z" fill="#ababab" /></svg>
          <span className="pt-[5px]">Chat</span>
        </div>
        <ChevronUp className="mt-[50px] size-2" strokeWidth={3} />
      </div>
      <div className="mr-2.5 mt-[51px] flex h-[22px] w-[52px] items-center justify-center rounded-md bg-[#c62f21] text-[10.200px] font-semibold text-white">Leave</div>
    </div>
  </div>
);

/* ---------- chat ---------- */

type Msg = { initials: string; color: string; name?: string; lines: string[]; w: string; split?: boolean };

const messages: Msg[] = [
  { initials: "<K", color: "bg-[#944eae]", lines: ["yes sir"], w: "w-[51px]" },
  { initials: "<W", color: "bg-[#ff9d10]", name: "<Chetan Wakode>  <6P...", split: true, lines: [], w: "w-[71px]" },
  { initials: "<", color: "bg-[#219d5e]", name: "<anish> <4pm>", lines: ["yes sir"], w: "w-[51px]" },
  { initials: "<B", color: "bg-[#2f465d]", name: "<Kranti Barde>  <4PM>", lines: ["yes sir"], w: "w-[51px]" },
  { initials: "<C", color: "bg-[#944eae]", name: "<Mohit Chotalia>  <4pm>", lines: ["understood now practical practice", "needed"], w: "w-[209px]" },
  { initials: "<", color: "bg-[#219d5e]", name: "<anish> <4pm>", lines: ["practice"], w: "w-[62px]" },
  { initials: "<<", color: "bg-[#ff9d10]", name: "<MunigantiRakesh>  <9a...", split: true, lines: ["curious for set interface"], w: "w-[149px]" },
];

const OkEmoji = () => (
  <svg viewBox="0 0 56 28" className="h-7 w-14">
    <circle cx="13.500" cy="14" r="13.500" fill="#38ac0b" /><circle cx="13.500" cy="14" r="11.400" fill="none" stroke="#fff" strokeWidth="1.300" />
    <text x="13.500" y="17.500" fontSize="9" fontWeight="bold" fill="#fff" textAnchor="middle">OK</text>
    <rect x="28" y="1" width="26" height="26" rx="2" fill="#38ac0b" />
    <path d="M33 16L35 14.500Q37 17 38 19Q42 11 48.500 5Q42 14 38.500 22.500H37Z" fill="#fff" stroke="#fff" strokeWidth=".8" />
  </svg>
);

const Message = ({ m }: { m: Msg }) => (
  <div className="mb-[13px] flex flex-col">
    {m.name && (
      <div className="ml-[51px] mr-[11px] flex h-[18px] items-center whitespace-pre pt-px text-[10.400px] text-[#797985]">
        <span className={m.split ? "w-[134px]" : "pr-1 tracking-[0.1px]"}>{m.name}</span>
        <span>to <span className="text-[#1778e8]">Everyone</span></span>
        <span className="ml-auto tracking-[0.05px]">11:47 AM</span>
      </div>
    )}
    <div className="flex pl-[18px]">
      <div className={`mr-2 flex size-6 items-center justify-center text-[9px] text-white ${m.color} ${m.name ? "mt-[1.500px] rounded-md" : "-mt-[2px] rounded-b-md"}`}>{m.initials}</div>
      <div className={`${m.w} flex flex-col justify-center bg-[#f1f1f5] pl-2 text-[11.800px] leading-[17px] text-[#3f3f49] ${m.lines.length === 2 ? "h-[45px]" : m.lines.length === 0 ? "h-[38px]" : m.name ? "h-[31px]" : "h-7"} ${m.name ? "rounded-[10px]" : "rounded-b-[10px] pb-1.5"}`}>
        {m.lines.length === 0 ? <OkEmoji /> : m.lines.map((l) => <span key={l} className="whitespace-nowrap tracking-[0.08px]">{l}</span>)}
      </div>
    </div>
  </div>
);

const ChatPanel = () => (
  <div className="flex w-[314px] flex-col bg-white">
    <div className="flex h-[39px] shrink-0 items-center pl-[15px] text-[#3b3b44]">
      <ChevronDown className="size-2.5" strokeWidth={2.500} />
      <span className="w-[264px] text-center text-[11px] font-semibold">Chat</span>
    </div>
    <div className="flex h-[434px] shrink-0 overflow-hidden">
      <div className="w-[305px]">{messages.map((m, i) => <Message key={i} m={m} />)}</div>
      <div className="flex h-[433px] w-[7px] flex-col justify-end rounded-full bg-[#f1f1f5]"><div className="size-[7px] rounded-full bg-[#acacb2]" /></div>
    </div>
    <div className="flex h-[22px] shrink-0 items-center justify-center gap-1 border-b border-[#e8e8ee] bg-[#f7f8fc] pb-px text-[10.100px] tracking-[-0.2px] text-[#5b5b68]">
      <svg viewBox="0 0 13 13" className="size-3" fill="none" stroke="#5b5b68"><circle cx="5.500" cy="4" r="2.500" /><path d="M7 11.500H1Q1 7.500 5.500 7.500" /><circle cx="9" cy="9.500" r="3" fill="#0e71eb" stroke="none" /></svg>
      Who can see your messages?
    </div>
    <div className="flex h-[38px] shrink-0 items-center pl-3.5 pr-[14px] text-[10px] text-[#4a4a55]">
      <span className="w-[20px]">To:</span>
      <span className="flex h-[19px] w-[62px] items-center justify-center gap-[3px] rounded-md bg-[#f1f1f5] text-[9.300px] font-semibold tracking-[-0.25px]">Everyone <ChevronDown className="size-2" strokeWidth={3.500} /></span>
      <Smile className="ml-auto size-3.5 text-[#5b5b68]" strokeWidth={1.700} />
    </div>
    <div className="whitespace-nowrap pl-3.5 text-[10.600px] leading-[10px] text-[#7c7c88]">Your text can be seen by panelists and other attendees</div>
  </div>
);

export default function App() {
  return (
    <div className="flex h-[768px] w-[1366px] flex-col overflow-hidden bg-black font-['Open_Sans','Noto_Sans',sans-serif]">
      <TitleBar />
      <MenuBar />
      <div className="ml-[104px] flex h-[632px] w-[1157px] shrink-0 flex-col pb-px">
        <div className="flex h-[597px] shrink-0"><Meeting /><ChatPanel /></div>
        <InnerTaskbar />
      </div>
      <PlayerControls />
      <OuterTaskbar />
    </div>
  );
}
